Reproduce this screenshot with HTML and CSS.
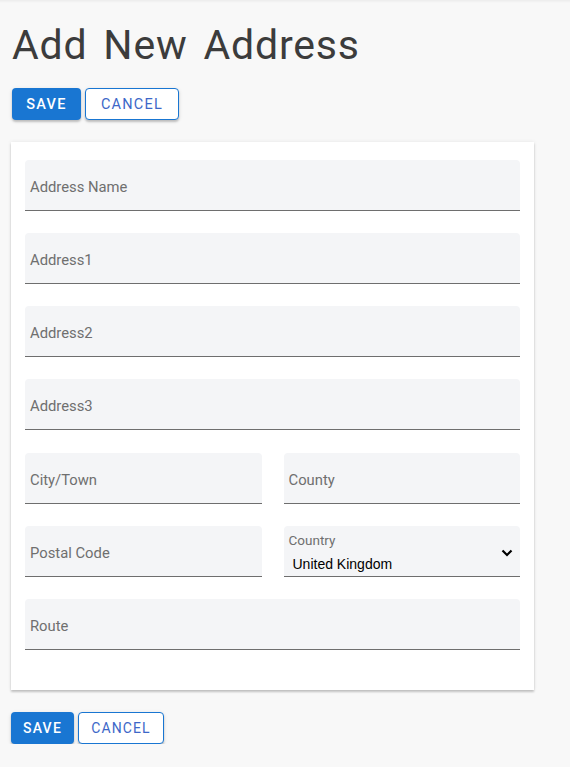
FILE: index.html
```html
<!DOCTYPE html>
<html>
<head>
<meta charset="utf-8">
<link rel="stylesheet" href="styles.css">
</head>
<body>
<div class="topshade"></div>
<main class="page">
  <h1 class="title">Add New Address</h1>
  <div class="actions actions-top">
    <button class="btn btn-save">Save</button>
    <button class="btn btn-cancel">Cancel</button>
  </div>
  <section class="card">
    <div class="field"><span class="label">Address Name</span></div>
    <div class="field"><span class="label">Address1</span></div>
    <div class="field"><span class="label">Address2</span></div>
    <div class="field"><span class="label">Address3</span></div>
    <div class="row row-first">
      <div class="field"><span class="label">City/Town</span></div>
      <div class="field"><span class="label">County</span></div>
    </div>
    <div class="row">
      <div class="field"><span class="label">Postal Code</span></div>
      <div class="field field-select">
        <span class="label-small">Country</span>
        <span class="select-value">United Kingdom</span>
        <svg class="chevron" width="12" height="8" viewBox="0 0 12 8"><path d="M1.5 1.5 L6 6 L10.5 1.5" fill="none" stroke="#000" stroke-width="2.2"/></svg>
      </div>
    </div>
    <div class="field"><span class="label">Route</span></div>
  </section>
  <div class="actions actions-bottom">
    <button class="btn btn-save">Save</button>
    <button class="btn btn-cancel">Cancel</button>
  </div>
</main>
</body>
</html>
```

FILE: styles.css
```css
html, body {
  margin: 0;
  padding: 0;
  background: #f8f8f8;
  font-family: Roboto, "Liberation Sans", sans-serif;
}
.topshade {
  height: 3px;
  background: linear-gradient(#ececec, #f8f8f8);
}
.page {
  padding: 0 0 0 12px;
  width: 522px;
}
.title {
  margin: 16px 0 0 0;
  font-size: 41px;
  line-height: 52px;
  font-weight: 400;
  letter-spacing: 0.8px;
  word-spacing: 5px;
  color: #3c3c3c;
}
.actions {
  display: flex;
  gap: 4px;
}
.actions-top {
  margin-top: 17px;
}
.actions-bottom {
  margin-top: 22px;
  margin-left: -1px;
}
.btn {
  height: 32px;
  border-radius: 4px;
  font-family: Roboto, sans-serif;
  font-size: 14px;
  font-weight: 500;
  letter-spacing: 1.25px;
  text-transform: uppercase;
  cursor: pointer;
  box-shadow: 0 2px 2px rgba(0,0,0,0.18), 0 1px 4px rgba(0,0,0,0.1);
}
.btn-save {
  background: #1976d2;
  color: #fff;
  border: none;
  padding: 0 13px;
}
.btn-cancel {
  background: #fff;
  color: #3d67c8;
  border: 1px solid #1976d2;
  padding: 0 15px;
  font-weight: 400;
}
.actions-top .btn-save { width: 69px; padding: 0; font-size: 14.5px; }
.actions-top .btn-cancel { width: 94px; padding: 0; font-size: 14.5px; }
.actions-bottom .btn-save { width: 63px; padding: 0; }
.actions-bottom .btn-cancel { width: 86px; padding: 0; letter-spacing: 1.1px; }
.card {
  margin-top: 22px;
  margin-left: -1px;
  width: 495px;
  background: #fff;
  padding: 18px 14px 40px 14px;
  box-shadow: 0 2px 2px rgba(0,0,0,0.2), 0 0 4px rgba(0,0,0,0.08);
  display: flex;
  flex-direction: column;
  gap: 22px;
}
.row {
  display: grid;
  grid-template-columns: 1fr 1fr;
  gap: 22px;
}
.row-first {
  margin-top: 1px;
}
.field {
  position: relative;
  height: 50px;
  background: #f4f5f7;
  border-radius: 4px 4px 0 0;
  border-bottom: 1px solid #6e6e6e;
  display: flex;
  align-items: center;
  padding: 0 5px;
}
.label {
  font-size: 14.8px;
  color: #6f6f6f;
  padding-top: 3px;
}
.field-select {
  flex-direction: column;
  align-items: flex-start;
  justify-content: flex-start;
}
.label-small {
  font-size: 13.5px;
  color: #6f6f6f;
  margin-top: 6px;
  line-height: 16px;
}
.select-value {
  font-family: "Liberation Sans", Arial, sans-serif;
  font-size: 14px;
  color: #000;
  margin: 8px 0 0 4px;
  line-height: 17px;
}
.chevron {
  position: absolute;
  right: 7px;
  top: 23px;
}
```
